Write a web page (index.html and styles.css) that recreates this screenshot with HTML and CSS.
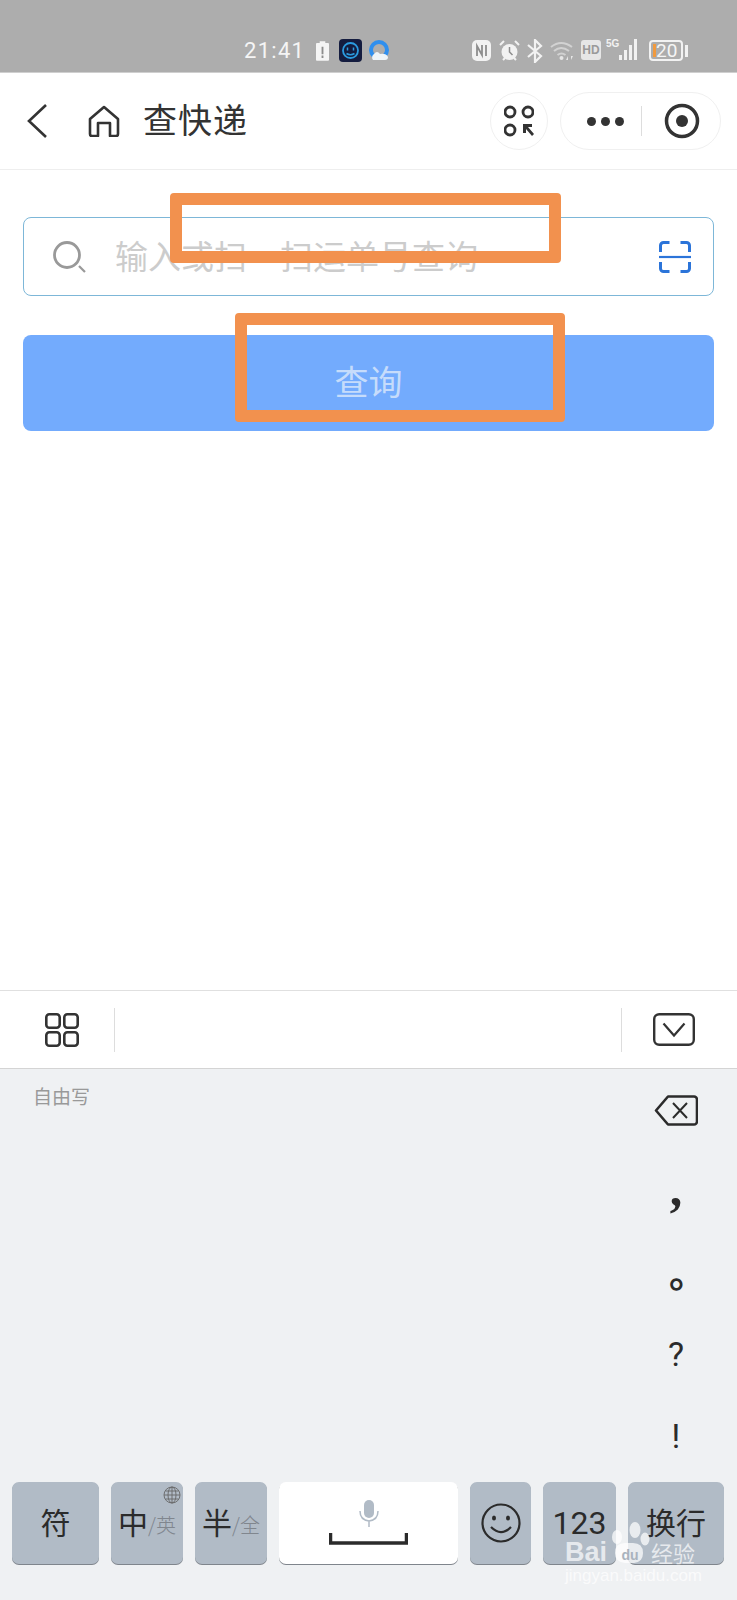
FILE: index.html
```html
<!DOCTYPE html>
<html lang="zh-CN">
<head>
    <meta charset="UTF-8">
    <meta name="viewport" content="width=device-width, initial-scale=1.0">
    <title>查快递</title>
    <link rel="stylesheet" href="styles.css">
</head>
<body>
    <!-- Phone status bar -->
    <div class="status-bar">
        <span class="status-time">21:41</span>
        <svg class="status-icon icon-charge" viewBox="0 0 14 22"><path d="M4 1h6v2h3a1 1 0 0 1 1 1v17a1 1 0 0 1-1 1H1a1 1 0 0 1-1-1V4a1 1 0 0 1 1-1h3z" fill="#f5f5f5"/><path d="M6 7h2v8H6zM6 16.500h2v2.500H6z" fill="#8d8d8d"/></svg>
        <svg class="status-icon icon-app" viewBox="0 0 23 23"><rect width="23" height="23" rx="4" fill="#141c3f"/><circle cx="11.500" cy="11.500" r="7.500" fill="none" stroke="#2b9be0" stroke-width="1.800"/><path d="M8.500 8.500v3M14.500 8.500v3M7.500 14.500q4 2.500 8 0" fill="none" stroke="#2b9be0" stroke-width="1.500"/></svg>
        <svg class="status-icon icon-browser" viewBox="0 0 20 21"><circle cx="10" cy="10" r="8" fill="none" stroke="#2f8fee" stroke-width="4"/><path d="M4 20a4 4 0 0 1 1-6q3-4 6 0 6-1 8 3 0 3-3 3z" fill="#eef4f8"/></svg>
        <div class="status-right">
            <svg class="status-icon icon-nfc" viewBox="0 0 19 21"><rect width="19" height="21" rx="5" fill="#f2f2f2"/><path d="M5 16V6l5 9V5M14 5v11" fill="none" stroke="#8d8d8d" stroke-width="1.800"/></svg>
            <svg class="status-icon icon-alarm" viewBox="0 0 21 22"><circle cx="10.500" cy="12" r="8" fill="#f2f2f2"/><path d="M10.500 7v5l3 3" fill="none" stroke="#8d8d8d" stroke-width="1.500"/><path d="M1 5l4-4M20 5l-4-4M4 20l2-2M17 20l-2-2" stroke="#f2f2f2" stroke-width="2"/></svg>
            <svg class="status-icon icon-bt" viewBox="0 0 16 24"><path d="M1 6l13 11-6 6V1l6 6L1 18" fill="none" stroke="#f2f2f2" stroke-width="2.200"/></svg>
            <svg class="status-icon icon-wifi" viewBox="0 0 25 21"><path d="M1 7q10-8 21 0M4 11q7-6 15 0M7.500 15q4-3 8 0" fill="none" stroke="#d2d2d2" stroke-width="2"/><circle cx="11.500" cy="18" r="2" fill="#e6e6e6"/><path d="M18 16l-2 4h2zM21 20l2-4h-2z" fill="#e6e6e6"/></svg>
            <span class="status-hd">HD</span>
            <div class="status-signal">
                <span class="signal-label">5G</span>
                <i class="signal-bar bar-1"></i><i class="signal-bar bar-2"></i><i class="signal-bar bar-3"></i><i class="signal-bar bar-4"></i>
            </div>
            <div class="status-battery">
                <div class="battery-body"><i class="battery-level"></i><span>20</span></div>
                <i class="battery-nub"></i>
            </div>
        </div>
    </div>

    <!-- Mini program nav -->
    <nav class="nav-bar">
        <svg class="nav-back" viewBox="0 0 20 34"><path d="M19 1L2 17l17 16" fill="none" stroke="#333" stroke-width="2.600"/></svg>
        <svg class="nav-home" viewBox="0 0 32 32"><path d="M2 14L16 2l14 12v15a2 2 0 0 1-2 2h-6V18H10v13H4a2 2 0 0 1-2-2z" fill="none" stroke="#333" stroke-width="2.600" stroke-linejoin="round"/></svg>
        <h1 class="nav-title">查快递</h1>
        <div class="nav-circle">
            <svg viewBox="0 0 30 32" class="nav-apps"><circle cx="6" cy="7" r="5" fill="none" stroke="#333" stroke-width="2.800"/><circle cx="24" cy="7" r="5" fill="none" stroke="#333" stroke-width="2.800"/><circle cx="6" cy="25" r="5" fill="none" stroke="#333" stroke-width="2.800"/><path d="M19 28V19h9v3h-4l6 7-2 2-6-7v4z" fill="#333"/></svg>
        </div>
        <div class="nav-capsule">
            <div class="capsule-dots"><i></i><i></i><i></i></div>
            <i class="capsule-line"></i>
            <svg class="capsule-target" viewBox="0 0 36 36"><circle cx="18" cy="18" r="15.500" fill="none" stroke="#333" stroke-width="3.500"/><circle cx="18" cy="18" r="6" fill="#333"/></svg>
        </div>
    </nav>

    <main class="content">
        <div class="search-box">
            <svg class="search-icon" viewBox="0 0 34 32"><circle cx="14" cy="14" r="12.500" fill="none" stroke="#999" stroke-width="2.800"/><path d="M26 25l6 6" stroke="#999" stroke-width="2.200"/></svg>
            <span class="search-hint">输入或扫一扫运单号查询</span>
            <svg class="scan-icon" viewBox="0 0 32 32"><path d="M1.500 11V4.500a3 3 0 0 1 3-3h6M21.500 1.500h6a3 3 0 0 1 3 3V11M1.500 21v6.500a3 3 0 0 0 3 3h6M21.500 30.500h6a3 3 0 0 0 3-3V21" fill="none" stroke="#2b74d9" stroke-width="3"/><path d="M0 16h32" stroke="#2b74d9" stroke-width="2.200"/></svg>
        </div>
        <button class="query-button">查询</button>

        <!-- orange marks drawn on top of the screenshot -->
        <div class="mark mark-search"></div>
        <div class="mark mark-button"></div>
    </main>

    <!-- Keyboard -->
    <div class="kb-toolbar">
        <svg class="kb-grid" viewBox="0 0 34 34"><rect x="1.300" y="1.300" width="13.400" height="13.400" rx="3" fill="none" stroke="#333" stroke-width="2.600"/><rect x="19.300" y="1.300" width="13.400" height="13.400" rx="3" fill="none" stroke="#333" stroke-width="2.600"/><rect x="1.300" y="19.300" width="13.400" height="13.400" rx="3" fill="none" stroke="#333" stroke-width="2.600"/><rect x="19.300" y="19.300" width="13.400" height="13.400" rx="3" fill="none" stroke="#333" stroke-width="2.600"/></svg>
        <i class="kb-line"></i>
        <div class="kb-spacer"></div>
        <i class="kb-line"></i>
        <svg class="kb-hide" viewBox="0 0 42 33"><rect x="1.200" y="1.200" width="39.600" height="30.600" rx="5" fill="none" stroke="#333" stroke-width="2.400"/><path d="M10.500 10.500l10.500 12 10.500-12" fill="none" stroke="#333" stroke-width="2.200"/></svg>
    </div>

    <div class="keypad">
        <div class="write-area">
            <span class="write-label">自由写</span>
            <div class="side-keys">
                <div class="side-key"><svg class="backspace" viewBox="0 0 44 31"><path d="M14 1.500h26a3 3 0 0 1 3 3v22a3 3 0 0 1-3 3H14L2 15.500z" fill="none" stroke="#2b2b2b" stroke-width="2.600" stroke-linejoin="round"/><path d="M19 8l14 15M33 8L19 23" stroke="#2b2b2b" stroke-width="2"/></svg></div>
                <div class="side-key key-comma">,</div>
                <div class="side-key key-stop">。</div>
                <div class="side-key">?</div>
                <div class="side-key">!</div>
            </div>
        </div>
        <div class="key-row">
            <div class="key">符</div>
            <div class="key key-pair">
                <svg class="globe" viewBox="0 0 18 18"><g fill="none" stroke="#666" stroke-width="0.900"><circle cx="9" cy="9" r="8"/><ellipse cx="9" cy="9" rx="4" ry="8"/><path d="M9 1v16M1 9h16M2.500 5h13M2.500 13h13"/></g></svg>
                中<small>/英</small>
            </div>
            <div class="key key-pair">半<small>/全</small></div>
            <div class="key key-space">
                <svg class="mic" viewBox="0 0 20 27"><rect x="5" y="0" width="10" height="18" rx="5" fill="#b1bbc6"/><path d="M1 11q0 9 9 10 9-1 9-10M10 21v6" fill="none" stroke="#b1bbc6" stroke-width="1.500"/></svg>
                <svg class="space-mark" viewBox="0 0 79 12"><path d="M1.500 0v10h76V0" fill="none" stroke="#2b2b2b" stroke-width="3.500"/></svg>
            </div>
            <div class="key key-icon">
                <svg class="smile" viewBox="0 0 40 40"><circle cx="20" cy="20" r="18.500" fill="none" stroke="#2b2b2b" stroke-width="2.200"/><ellipse cx="13" cy="15" rx="2" ry="2.600" fill="#2b2b2b"/><ellipse cx="27" cy="15" rx="2" ry="2.600" fill="#2b2b2b"/><path d="M10 24q10 10 20 0" fill="none" stroke="#2b2b2b" stroke-width="2.200"/></svg>
            </div>
            <div class="key key-num">123</div>
            <div class="key">换行</div>
        </div>

        <!-- site watermark -->
        <div class="watermark">
            <svg class="wm-paw" viewBox="0 0 44 44"><g fill="#fff" fill-opacity="0.72"><ellipse cx="9" cy="17" rx="5" ry="7"/><ellipse cx="27" cy="10" rx="5.500" ry="8"/><ellipse cx="37" cy="19" rx="4.500" ry="6.500"/><path d="M7 33q0-10 10-10h8q10 0 10 10 0 9-9 10h-9q-10-1-10-10z"/></g></svg>
            <div class="wm-brand"><span class="wm-bai">Bai</span><span class="wm-du">du</span><span class="wm-cn">经验</span></div>
            <div class="wm-url">jingyan.baidu.com</div>
        </div>
    </div>
</body>
</html>
```

FILE: styles.css
```css
* {
    margin: 0;
    padding: 0;
    box-sizing: border-box;
}

body {
    width: 737px;
    height: 1600px;
    display: flex;
    flex-direction: column;
    overflow: hidden;
    background: #ffffff;
    color: #2b2b2b;
    font-family: 'Noto Sans CJK SC', 'Noto Sans', sans-serif;
}

svg {
    display: block;
    flex-shrink: 0;
}

/* status bar */
.status-bar {
    height: 73px;
    flex-shrink: 0;
    display: flex;
    align-items: flex-start;
    padding-left: 244px;
    padding-top: 39px;
    background: #adadad;
    border-bottom: 1px solid #cfcfcf;
}

.status-time {
    width: 57px;
    height: 23px;
    font-family: Roboto, sans-serif;
    font-size: 22px;
    line-height: 23px;
    letter-spacing: 1.3px;
    color: #f5f5f5;
    white-space: nowrap;
}

.status-icon { margin-top: 1px; }

.icon-charge { width: 13px; height: 21px; margin-left: 15px; }
.icon-app { width: 23px; height: 23px; margin-left: 10px; margin-top: 0; }
.icon-browser { width: 20px; height: 21px; margin-left: 7px; }

.status-right {
    display: flex;
    align-items: flex-start;
    margin-left: 83px;
}

.icon-nfc { width: 19px; height: 21px; }
.icon-alarm { width: 21px; height: 22px; margin-left: 8px; }
.icon-bt { width: 16px; height: 24px; margin-left: 7px; margin-top: 0; }
.icon-wifi { width: 25px; height: 21px; margin-left: 7px; }

.status-hd {
    width: 20px;
    height: 20px;
    margin-left: 6px;
    margin-top: 1px;
    border-radius: 3px;
    background: #e6e6e6;
    color: #9a9a9a;
    font-family: 'Liberation Sans', sans-serif;
    font-size: 12px;
    font-weight: 700;
    line-height: 20px;
    text-align: center;
}

.status-signal {
    display: flex;
    align-items: flex-end;
    gap: 2px;
    width: 34px;
    height: 21px;
    margin-left: 5px;
    position: relative;
    padding-left: 13px;
}

.signal-label {
    position: absolute;
    left: 0;
    top: 0;
    font-family: 'Liberation Sans', sans-serif;
    font-size: 10px;
    font-weight: 700;
    line-height: 10px;
    color: #f2f2f2;
}

.signal-bar {
    width: 3px;
    background: #f2f2f2;
}

.bar-1 { height: 5px; }
.bar-2 { height: 10px; }
.bar-3 { height: 15px; }
.bar-4 { height: 21px; }

.status-battery {
    display: flex;
    align-items: center;
    margin-left: 9px;
    margin-top: 1px;
}

.battery-body {
    width: 34px;
    height: 21px;
    border: 2px solid #f2f2f2;
    border-radius: 4px;
    display: flex;
    align-items: center;
    padding-left: 2px;
    color: #f5f5f5;
    font-family: Roboto, sans-serif;
    font-size: 19px;
    line-height: 17px;
}

.battery-level {
    width: 3px;
    height: 13px;
    background: #f19a3e;
}

.battery-nub {
    width: 3px;
    height: 12px;
    margin-left: 2px;
    background: #f2f2f2;
}

/* nav */
.nav-bar {
    height: 97px;
    flex-shrink: 0;
    display: flex;
    align-items: center;
    padding-left: 27px;
    border-bottom: 1px solid #eeeeee;
}

.nav-back { width: 20px; height: 34px; }
.nav-home { width: 32px; height: 32px; margin-left: 41px; }

.nav-title {
    width: 104px;
    margin-left: 23px;
    margin-bottom: 4px;
    font-size: 34px;
    font-weight: 400;
    line-height: 44px;
    letter-spacing: 1px;
    color: #333333;
    white-space: nowrap;
}

.nav-circle {
    width: 58px;
    height: 58px;
    margin-left: 243px;
    display: flex;
    align-items: center;
    justify-content: center;
    border: 1px solid #f0f0f0;
    border-radius: 50%;
}

.nav-apps { width: 30px; height: 32px; }

.nav-capsule {
    width: 161px;
    height: 58px;
    margin-left: 12px;
    display: flex;
    align-items: center;
    padding-left: 26px;
    border: 1px solid #f0f0f0;
    border-radius: 29px;
}

.capsule-dots {
    display: flex;
    gap: 5px;
    width: 38px;
}

.capsule-dots i {
    width: 9px;
    height: 9px;
    border-radius: 50%;
    background: #333333;
}

.capsule-line {
    width: 1px;
    height: 30px;
    margin-left: 16px;
    background: #dddddd;
}

.capsule-target {
    width: 36px;
    height: 36px;
    margin-left: 22px;
}

/* page content */
.content {
    flex: 1;
    position: relative;
    padding: 47px 23px 0;
}

.search-box {
    height: 79px;
    display: flex;
    align-items: center;
    padding: 0 22px 0 29px;
    border: 1px solid #7db7d8;
    border-radius: 8px;
}

.search-icon { width: 34px; height: 32px; }

.search-hint {
    flex: 1;
    margin-left: 28px;
    margin-bottom: 3px;
    font-size: 33px;
    line-height: 40px;
    color: #cccccc;
    white-space: nowrap;
}

.scan-icon { width: 32px; height: 32px; }

.query-button {
    display: block;
    width: 100%;
    height: 96px;
    margin-top: 39px;
    padding-bottom: 6px;
    border: none;
    border-radius: 8px;
    background: #73abfd;
    color: #c6dcfb;
    font-family: inherit;
    font-size: 34px;
}

.mark {
    position: absolute;
    border: 12px solid #f2914e;
    border-radius: 4px;
}

.mark-search {
    left: 170px;
    top: 23px;
    width: 391px;
    height: 70px;
}

.mark-button {
    left: 235px;
    top: 143px;
    width: 330px;
    height: 109px;
}

/* keyboard */
.kb-toolbar {
    height: 79px;
    flex-shrink: 0;
    display: flex;
    align-items: center;
    padding: 0 42px 0 45px;
    border-top: 1px solid #e0e0e0;
    border-bottom: 1px solid #d4d4d4;
}

.kb-grid { width: 34px; height: 34px; }

.kb-line {
    width: 1px;
    height: 44px;
    margin-left: 35px;
    background: #dddddd;
}

.kb-spacer { flex: 1; }

.kb-hide {
    width: 42px;
    height: 33px;
    margin-left: 31px;
}

.keypad {
    height: 531px;
    flex-shrink: 0;
    position: relative;
    background: #eff1f3;
}

.write-area {
    height: 413px;
    display: flex;
    justify-content: space-between;
}

.write-label {
    margin: 14px 0 0 33px;
    font-size: 19px;
    line-height: 26px;
    color: #999999;
}

.side-keys {
    width: 80px;
    margin-right: 21px;
}

.side-key {
    height: 82px;
    display: flex;
    align-items: center;
    justify-content: center;
    padding-bottom: 4px;
    font-family: Roboto, sans-serif;
    font-size: 34px;
    color: #2b2b2b;
}

.side-key:first-child { padding-bottom: 0; }

.backspace { width: 44px; height: 31px; }

.key-comma {
    font-family: 'Liberation Serif', serif;
    font-size: 50px;
    font-weight: 700;
    padding-bottom: 8px;
}

.key-stop {
    font-family: 'Noto Sans CJK SC', sans-serif;
    font-size: 38px;
    padding-left: 24px;
    padding-bottom: 8px;
    font-weight: 700;
}

.key-row {
    height: 82px;
    display: grid;
    grid-template-columns: 87px 72px 72px 179px 61px 73px 96px;
    gap: 12px;
    padding-left: 12px;
}

.key {
    position: relative;
    display: flex;
    align-items: center;
    justify-content: center;
    padding-bottom: 4px;
    border-radius: 7px;
    background: #b1bbc6;
    box-shadow: 0 1px 0 #7f858c;
    font-size: 30px;
    white-space: nowrap;
}

.key-num {
    padding-bottom: 0;
    font-family: Roboto, sans-serif;
    font-size: 32px;
}

.key-icon { padding-bottom: 0; }

.key-pair {
    justify-content: flex-start;
    padding-left: 7px;
}

.key-pair small {
    font-size: 20px;
    font-weight: 300;
    color: #80868e;
    margin-top: 6px;
}

.globe {
    position: absolute;
    right: 2px;
    top: 4px;
    width: 18px;
    height: 18px;
}

.key-space {
    flex-direction: column;
    justify-content: flex-start;
    padding-top: 18px;
    padding-bottom: 0;
    background: #ffffff;
}

.mic { width: 20px; height: 27px; }

.space-mark {
    width: 79px;
    height: 12px;
    margin-top: 6px;
}

.smile { width: 40px; height: 40px; }

.watermark {
    position: absolute;
    left: 565px;
    bottom: 16px;
    width: 134px;
    height: 48px;
    color: rgba(255, 255, 255, 0.7);
}

.wm-paw {
    position: absolute;
    left: 43px;
    top: -16px;
    width: 44px;
    height: 44px;
}

.wm-brand {
    position: relative;
    display: flex;
    align-items: center;
    height: 28px;
    margin-top: 2px;
    font-family: 'Liberation Sans', sans-serif;
    font-weight: 700;
}

.wm-bai {
    width: 50px;
    font-size: 27px;
    line-height: 28px;
}

.wm-du {
    width: 36px;
    margin-top: 6px;
    padding-right: 6px;
    font-size: 14px;
    line-height: 18px;
    text-align: center;
    color: #a9b3be;
}

.wm-cn {
    font-family: 'Noto Sans CJK SC', sans-serif;
    font-size: 22px;
    font-weight: 400;
    line-height: 28px;
}

.wm-url {
    margin-top: 2px;
    font-family: 'Liberation Sans', sans-serif;
    font-size: 17px;
    line-height: 16px;
    white-space: nowrap;
}
```
